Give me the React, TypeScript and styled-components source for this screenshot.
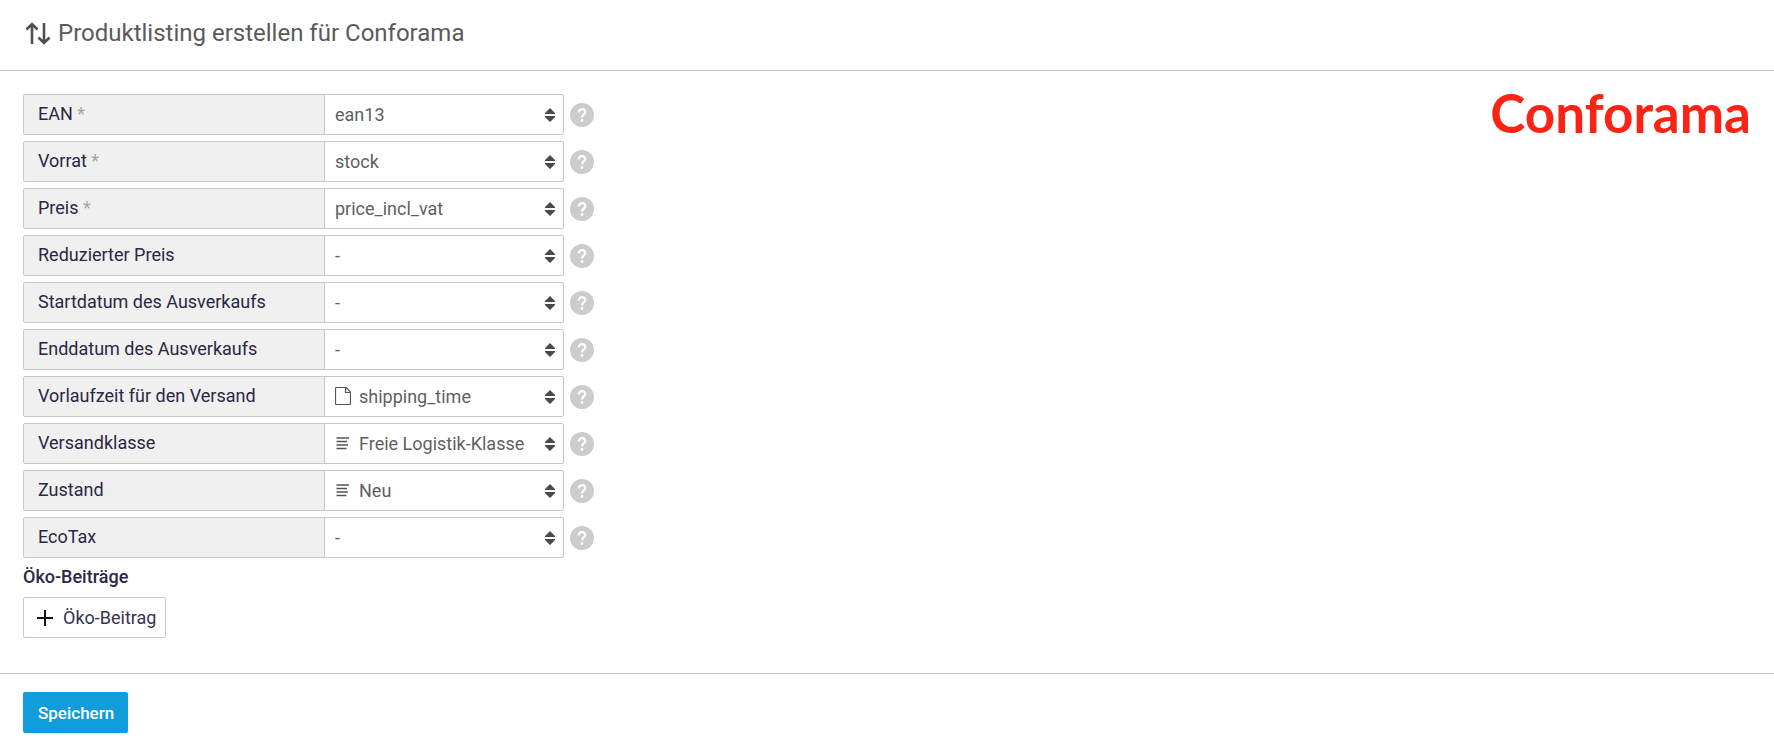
import React from 'react';
import styled, { createGlobalStyle } from 'styled-components';

const GlobalStyle = createGlobalStyle`
  *, *::before, *::after { box-sizing: border-box; }
  body {
    margin: 0;
    background: #fff;
    color: #2b2745;
    font: 400 18px/24px Roboto, sans-serif;
  }
  button, select { font: inherit; }
`;

const Header = styled.header`
  display: flex;
  align-items: center;
  gap: 5px;
  height: 71px;
  padding: 0 23px 4px;
  border-bottom: 1px solid #c8c8c8;
  color: #5a5a5a;
`;

const Title = styled.h1`
  margin: 0;
  font-size: 24px;
  line-height: 32px;
  font-weight: 400;
`;

const Main = styled.main`
  display: flex;
  justify-content: space-between;
  align-items: flex-start;
  padding: 23px 23px 35px;
`;

const Fields = styled.div`
  display: flex;
  flex-direction: column;
  gap: 6px;
`;

const Row = styled.div`
  display: flex;
  align-items: center;
  gap: 6px;
`;

const Group = styled.div`
  display: flex;
  width: 541px;
  height: 41px;
  border: 1px solid #c8c8c8;
  border-radius: 2px;
`;

const Label = styled.label`
  flex: 1;
  padding: 7px 14px;
  background: #f0f0f0;
`;

const Required = styled.span`
  color: #a5a5a5;
`;

const SelectBox = styled.div`
  position: relative;
  width: 239px;
  border-left: 1px solid #c8c8c8;
`;

const Select = styled.select<{ $indent: boolean }>`
  appearance: none;
  width: 100%;
  height: 100%;
  padding: 0 28px 0 ${(p) => (p.$indent ? 34 : 10)}px;
  border: 0;
  border-radius: 0;
  background: transparent;
  color: #5f5f5f;
`;

const OptionIcon = styled.svg`
  position: absolute;
  top: 10px;
  left: 10px;
  pointer-events: none;
`;

const Arrows = styled.svg`
  position: absolute;
  top: 13px;
  right: 8px;
  pointer-events: none;
`;

const HelpButton = styled.button`
  display: flex;
  padding: 0;
  border: 0;
  background: none;
  color: #ccc;
`;

const Subheading = styled.h2`
  margin: 7px 0 8px;
  font-size: 18px;
  line-height: 24px;
  font-weight: 500;
`;

const AddButton = styled.button`
  display: flex;
  align-items: center;
  gap: 10px;
  height: 41px;
  padding: 0 9px 0 13px;
  border: 1px solid #c8c8c8;
  border-radius: 2px;
  background: #fff;
  color: #35314f;
`;

const Logo = styled.div`
  color: #fa2314;
  font: 700 53px/37px Lato, sans-serif;
`;

const Footer = styled.footer`
  padding: 18px 23px;
  border-top: 1px solid #c8c8c8;
`;

const SaveButton = styled.button`
  height: 41px;
  padding: 0 14px 0 15px;
  border: 0;
  border-radius: 2px;
  background: #119ddb;
  color: #fff;
  font-size: 17px;
  font-weight: 500;
`;

type IconName = 'file' | 'lines';

interface Field {
  id: string;
  label: string;
  value: string;
  required?: boolean;
  icon?: IconName;
}

const fields: Field[] = [
  { id: 'ean', label: 'EAN', value: 'ean13', required: true },
  { id: 'stock', label: 'Vorrat', value: 'stock', required: true },
  { id: 'price', label: 'Preis', value: 'price_incl_vat', required: true },
  { id: 'sale-price', label: 'Reduzierter Preis', value: '-' },
  { id: 'sale-start', label: 'Startdatum des Ausverkaufs', value: '-' },
  { id: 'sale-end', label: 'Enddatum des Ausverkaufs', value: '-' },
  { id: 'lead-time', label: 'Vorlaufzeit für den Versand', value: 'shipping_time', icon: 'file' },
  { id: 'shipping-class', label: 'Versandklasse', value: 'Freie Logistik-Klasse', icon: 'lines' },
  { id: 'condition', label: 'Zustand', value: 'Neu', icon: 'lines' },
  { id: 'ecotax', label: 'EcoTax', value: '-' },
];

const icons: Record<IconName, React.ReactNode> = {
  file: (
    <path
      d="M1.5 .5H11L15.5 5V16.5Q15.5 17.5 14.5 17.5H1.5Q.5 17.5 .5 16.5V1.5Q.5 .5 1.5 .5ZM10.5 .5V5.5H15.5"
      stroke="#555"
      strokeWidth="1.2"
      fill="none"
    />
  ),
  lines: <path d="M1.5 4H14M1.5 7.5H12M1.5 11H13M1.5 14.5H11.5" stroke="#555" strokeWidth="1.5" />,
};

function FieldRow({ field }: { field: Field }) {
  return (
    <Row>
      <Group>
        <Label htmlFor={field.id}>
          {field.label}
          {field.required && <Required> *</Required>}
        </Label>
        <SelectBox>
          {field.icon && (
            <OptionIcon width="16" height="18" viewBox="0 0 16 18" aria-hidden="true">
              {icons[field.icon]}
            </OptionIcon>
          )}
          <Select id={field.id} $indent={Boolean(field.icon)} defaultValue={field.value}>
            <option>{field.value}</option>
          </Select>
          <Arrows width="10" height="14" viewBox="0 0 10 14" fill="#4a4a4a" aria-hidden="true">
            <path d="M5 0L10 5V6H0V5ZM0 8H10V9L5 14L0 9Z" />
          </Arrows>
        </SelectBox>
      </Group>
      <HelpButton type="button" aria-label={`Hilfe: ${field.label}`}>
        <svg width="24" height="24" viewBox="0 0 24 24" fill="none" aria-hidden="true">
          <circle cx="12" cy="12" r="12" fill="currentColor" />
          <path
            d="M8.8 9.4C8.8 7.400 10.2 6.2 12.1 6.2C14 6.2 15.2 7.3 15.2 8.9C15.2 11.4 12 11.5 12 14.6"
            stroke="#fff"
            strokeWidth="2.2"
          />
          <circle cx="12" cy="17.5" r="1.4" fill="#fff" />
        </svg>
      </HelpButton>
    </Row>
  );
}

export default function App() {
  return (
    <>
      <GlobalStyle />
      <Header>
        <svg width="30" height="24" viewBox="0 0 30 24" fill="none" stroke="#4f4f4f" strokeWidth="2.6" aria-hidden="true">
          <path d="M9 23V3M3.5 8.5L9 3L14.5 8.5M21 2V22M15.5 16.5L21 22L26.5 16.5" />
        </svg>
        <Title>Produktlisting erstellen für Conforama</Title>
      </Header>
      <Main>
        <div>
          <Fields>
            {fields.map((field) => (
              <FieldRow key={field.id} field={field} />
            ))}
          </Fields>
          <Subheading>Öko-Beiträge</Subheading>
          <AddButton type="button">
            <svg width="16" height="16" viewBox="0 0 16 16" stroke="#111" strokeWidth="2" aria-hidden="true">
              <path d="M8 0V16M0 8H16" />
            </svg>
            Öko-Beitrag
          </AddButton>
        </div>
        <Logo>Conforama</Logo>
      </Main>
      <Footer>
        <SaveButton type="button">Speichern</SaveButton>
      </Footer>
    </>
  );
}
